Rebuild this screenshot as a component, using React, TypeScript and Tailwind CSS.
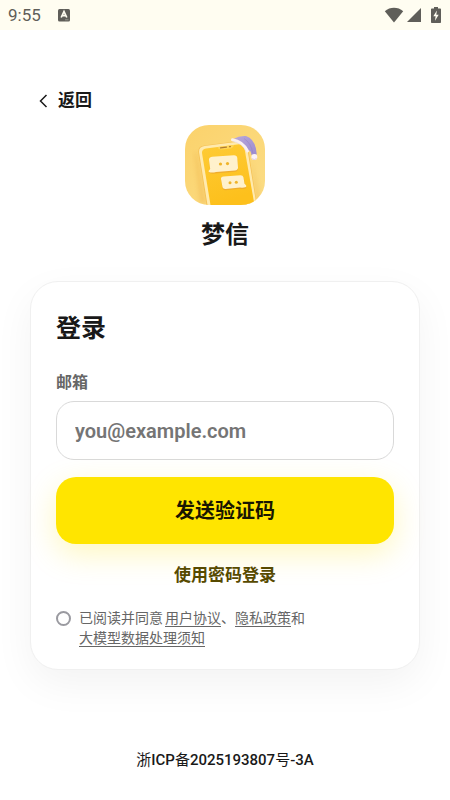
const StatusBar = () => {
  return (
    <div className="flex h-[30px] items-center bg-[#fffdf1] px-2 text-[#5f5e59]">
      <span className="text-[17px] leading-5">9:55</span>
      <svg className="ml-4 h-3.5 w-3.5" viewBox="0 0 14 14" aria-hidden="true">
        <rect x="1" y="1" width="12" height="12.500" rx="1.500" fill="currentColor" />
        <path d="M4.200 9.500 7 3.500l2.800 6M5.300 7.700h3.400" fill="none" stroke="#fffdf1" strokeWidth="1.700" />
        <path d="M8 11.800h3.500" stroke="#96958e" strokeWidth="1" />
      </svg>
      <div className="ml-auto flex items-center">
        <svg className="h-4 w-5" viewBox="0 0 20 16" aria-hidden="true">
          <path d="M.8 4.200C6-.4 14-.4 19.200 4.200L10 15.400Z" fill="currentColor" />
        </svg>
        <svg className="ml-0.5 h-4 w-4" viewBox="0 0 16 16" aria-hidden="true">
          <path d="M15 1v14H1Z" fill="currentColor" />
        </svg>
        <svg className="ml-2 h-4 w-3" viewBox="0 0 12 16" aria-hidden="true">
          <path d="M4 0h4v1.500h2.200q.8 0 .8.800v12.900q0 .8-.8.800H1.800q-.8 0-.8-.8V2.300q0-.8.800-.8H4Z" fill="currentColor" />
          <path d="M6.900 3.600 3.300 9.200h2.300l-.6 4.600 3.700-6.100H6.300Z" fill="#fffdf1" />
        </svg>
      </div>
    </div>
  )
}

const Logo = () => {
  return (
    <svg className="h-20 w-20 rounded-3xl" viewBox="0 0 80 80" role="img" aria-label="梦信">
      <defs>
        <linearGradient id="wall" x1="0" y1="0" x2="1" y2="1">
          <stop offset="0" stopColor="#fbd26b" />
          <stop offset="1" stopColor="#fbdd86" />
        </linearGradient>
        <linearGradient id="screen" x1="0" y1="0" x2="0.300" y2="1">
          <stop offset="0" stopColor="#fecb35" />
          <stop offset="1" stopColor="#fdc01c" />
        </linearGradient>
        <linearGradient id="hat" x1="0" y1="0" x2="1" y2="1">
          <stop offset="0" stopColor="#b9a8dc" />
          <stop offset="1" stopColor="#9c8bcf" />
        </linearGradient>
        <filter id="soft" x="-20%" y="-20%" width="140%" height="140%">
          <feGaussianBlur stdDeviation="2" />
        </filter>
      </defs>
      <rect width="80" height="80" fill="url(#wall)" />
      <path d="M12 27 21 78H15L10 29Z" fill="#eda93c" opacity=".35" filter="url(#soft)" />
      <path d="M66 34 78 80H70Z" fill="#efb448" opacity=".3" filter="url(#soft)" />
      {/* phone */}
      <path d="M13.200 27Q13 21.200 19 20.500L54 16Q61.500 15.500 63 22L72 80H21.500Z" fill="#f5c257" />
      <path d="M14 27Q13.800 21.800 19.500 21L54.500 16.500Q61 16 62.200 23L71.500 80H22.500Z" fill="#ffeaae" />
      <path d="M17 28Q16.800 24.200 21 23.600L54 19.300Q58.500 19 59.500 23.500L68.800 76Q69 80 66 80H25.500Z" fill="url(#screen)" />
      <path d="M32.500 22.300 49 20Q48.500 23 46 23.400L36.500 24.600Q33.500 24.800 32.500 22.300Z" fill="#ffd558" />
      <path d="m35.500 22.900 6-.8M44.500 21.700l1-.1" stroke="#b07c35" strokeWidth="1.200" strokeLinecap="round" />
      {/* upper bubble */}
      <path d="M24.500 36Q24 33.500 27 33.200L49 32Q52 32 52.300 34.500L53 43.500Q53 46.500 50 46.800L30 48.500Q27 49 24 47.800Q23.200 47 25 45Z" fill="#efad2e" />
      <path d="M24 35Q23.800 32.400 27 31.800L49 30.300Q52 30.300 52.300 33L53 42.500Q53 45.200 50 45.500L31 47Q27 48 23.700 47Q23 46 25.200 44Z" fill="#fff1cc" />
      <circle cx="35.500" cy="39" r="1.600" fill="#efb429" />
      <circle cx="42.500" cy="38.600" r="1.600" fill="#efb429" />
      {/* lower bubble */}
      <path d="M36.300 55.500Q36 53.300 38.500 53L56 52Q58.500 52 59 54L60 60Q62 62 61 63.200Q58 64.500 55 63.800L40.500 65.300Q37.500 65.300 37.300 62Z" fill="#efad2e" />
      <path d="M36 54Q35.800 51.800 38.500 51.500L55.500 50.200Q58 50.200 58.500 52.500L59.500 58.800Q62 60.800 61 62Q58 63 55 62.500L40.500 64Q37.500 64 37.300 61Z" fill="#fff1cc" />
      <circle cx="45" cy="57.700" r="1.500" fill="#efb429" />
      <circle cx="51.300" cy="57.200" r="1.500" fill="#efb429" />
      {/* nightcap */}
      <path d="M48.500 14Q54 10.500 61 11Q71 14.500 71.800 29.500L66.500 30Q65.500 24 63.500 26Q57 18 48.500 14Z" fill="url(#hat)" />
      <path d="M59 13.500Q66 18 67.800 28" fill="none" stroke="#8270b8" strokeWidth=".7" opacity=".4" />
      <path d="M47.500 14.800Q57.500 16.500 62.500 26" fill="none" stroke="#faf0f0" strokeWidth="3" strokeLinecap="round" />
      <path d="M47.500 16.200Q56.500 17.800 61.200 26.500" fill="none" stroke="#dacbdd" strokeWidth=".7" opacity=".5" />
      <circle cx="69.300" cy="32" r="3" fill="#faf1f8" />
      <path d="M67 33.600q2.300 2.200 4.600-.2" fill="none" stroke="#d6c3dc" strokeWidth=".8" />
    </svg>
  )
}

const LoginCard = () => {
  return (
    <form
      className="mt-7 rounded-[28px] border border-[#f0f0f0] bg-white px-[25px] pt-[29px] pb-[21px] shadow-[0_14px_40px_rgba(0,0,0,0.05)]"
      onSubmit={(e) => e.preventDefault()}
    >
      <h2 className="text-[25px] leading-9 font-bold">登录</h2>

      <label htmlFor="email" className="mt-6 block text-base leading-6 font-bold text-[#666]">
        邮箱
      </label>
      <input
        id="email"
        type="email"
        placeholder="you@example.com"
        className="mt-1.5 block h-[59px] w-full rounded-[18px] border border-[#d9d9d9] bg-white px-[18px] text-xl font-semibold outline-none placeholder:text-[#757575]"
      />

      <button
        type="submit"
        className="mt-[17px] block h-[67px] w-full rounded-[20px] bg-[#ffe500] text-xl font-bold text-[#191600] shadow-[0_10px_30px_rgba(255,229,0,0.25)]"
      >
        发送验证码
      </button>
      <button type="button" className="mx-auto mt-4 block h-[30px] px-4 text-[17px] leading-[30px] font-bold text-[#574a00]">
        使用密码登录
      </button>

      <div className="mt-[18px] flex gap-2 text-sm leading-5 text-[#666]">
        <input
          id="agree"
          type="checkbox"
          className="mt-[3px] h-[15px] w-[15px] shrink-0 appearance-none rounded-full border-2 border-[#9a9aa0] checked:bg-[#ffe500]"
        />
        <p>
          <label htmlFor="agree" className="mr-0.5">已阅读并同意</label>
          <a href="#terms" className="border-b border-[#666]">用户协议</a>、
          <a href="#privacy" className="border-b border-[#666]">隐私政策</a>和
          <br />
          <a href="#model" className="border-b border-[#666]">大模型数据处理须知</a>
        </p>
      </div>
    </form>
  )
}

const App = () => {
  return (
    <div className="flex min-h-screen flex-col bg-white font-[Roboto,'Noto_Sans_CJK_SC',sans-serif] text-[#191919]">
      <StatusBar />

      <main className="px-[30px] pt-[57px]">
        <button type="button" className="flex h-7 items-center gap-2 pl-2 text-[17px] font-bold">
          <svg className="h-5 w-3" viewBox="0 0 12 20" fill="none" stroke="currentColor" strokeWidth="1.500" aria-hidden="true">
            <path d="M8.500 4 2.500 10l6 6" />
          </svg>
          返回
        </button>

        <div className="mt-2.5 flex flex-col items-center">
          <Logo />
          <h1 className="mt-3 text-2xl leading-9 font-bold">梦信</h1>
        </div>

        <LoginCard />
      </main>

      <footer className="mt-auto pt-12 pb-7 text-center text-[15px] leading-6">
        浙<span className="font-medium">ICP</span>备<span className="font-medium">2025193807</span>号
        <span className="font-medium">-3A</span>
      </footer>
    </div>
  )
}

export default App
